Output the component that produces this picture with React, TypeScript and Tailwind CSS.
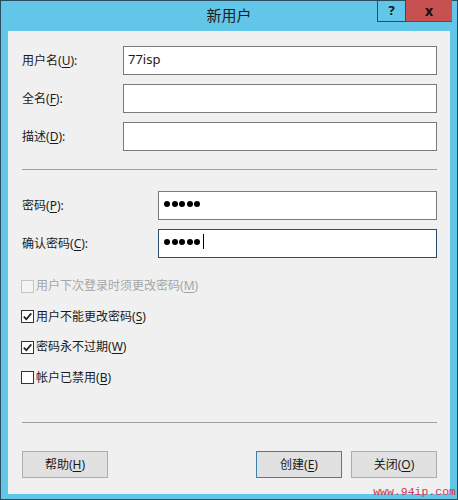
import type { ReactNode } from "react";

const FONT = "font-['Noto_Sans','Noto_Sans_CJK_SC',sans-serif]";

function Label({ text, hot, tail = ":" }: { text: string; hot: string; tail?: string }) {
  return (
    <span className="whitespace-nowrap">
      {text}(<span className="underline underline-offset-2">{hot}</span>){tail}
    </span>
  );
}

function TextBox({ children, focused }: { children?: ReactNode; focused?: boolean }) {
  return (
    <div
      className={`h-[29px] bg-white border flex items-start pl-[4px] pt-[3px] ${
        focused ? "border-[#2b4d6b]" : "border-[#7a7a7a]"
      }`}
    >
      {children}
    </div>
  );
}

function Dots({ caret }: { caret?: boolean }) {
  return (
    <div className="flex items-center gap-[1.6px] h-[16px] pl-[1px] pt-[1px]">
      {[0, 1, 2, 3, 4].map((i) => (
        <span key={i} className="w-[6px] h-[6px] rounded-full bg-black" />
      ))}
      {caret && <span className="ml-[1px] w-px h-[15px] bg-black" />}
    </div>
  );
}

function Check({ checked, disabled, text, hot }: { checked?: boolean; disabled?: boolean; text: string; hot: string }) {
  return (
    <div className="h-[30.5px] flex items-center gap-[2px]">
      <span
        className={`w-[13px] h-[13px] border flex items-center justify-center ${
          disabled ? "border-[#c4c4c4] bg-[#f4f4f4]" : "border-[#333] bg-white"
        }`}
      >
        {checked && (
          <svg width="11" height="11" viewBox="0 0 11 11">
            <path d="M1.8 5.6 L4.3 8.2 L9.3 2.4" fill="none" stroke="#222" strokeWidth="1.7" />
          </svg>
        )}
      </span>
      <span className={disabled ? "text-[#a6a6a6]" : "text-[#1a1a1a]"}>
        <Label text={text} hot={hot} tail="" />
      </span>
    </div>
  );
}

function Button({ children, primary }: { children: ReactNode; primary?: boolean }) {
  return (
    <div
      className={`w-[86px] h-[27px] flex items-center justify-center bg-[#e1e1e1] border ${
        primary ? "border-[#3c7fb1]" : "border-[#adadad]"
      }`}
    >
      {children}
    </div>
  );
}

export default function App() {
  return (
    <div className={`relative w-[458px] h-[500px] bg-[#62c6e8] border border-[#2a4e60] flex flex-col ${FONT} text-[12px] text-[#1a1a1a]`}>
      <div className="relative h-[30px] shrink-0">
        <div className="h-full flex items-center justify-center pb-[1px] text-[15px] text-[#1c1c1c]">新用户</div>
        <div className="absolute top-[-1px] right-[5px] flex">
          <div className="w-[29px] h-[22px] border border-[#2a4e60] flex items-center justify-center text-[13px] font-bold text-[#111]">
            ?
          </div>
          <div className="w-[46px] h-[22px] bg-[#c75050] border-b border-[#8a3a3a] flex items-center justify-center text-[14px] font-bold text-[#111]">
            x
          </div>
        </div>
      </div>

      <div className="flex-1 mx-[7px] mb-[5px] bg-[#f0f0f0] flex flex-col pl-[14px] pr-[13px]">
        <div className="pt-[15px] grid grid-cols-[101px_1fr] gap-y-[9px] items-center">
          <Label text="用户名" hot="U" />
          <TextBox>
            <span className="text-[13px] leading-[18px]">77isp</span>
          </TextBox>
          <Label text="全名" hot="F" />
          <TextBox />
          <Label text="描述" hot="D" />
          <TextBox />
        </div>

        <div className="mt-[18px] h-px bg-[#a0a0a0]" />

        <div className="mt-[21px] grid grid-cols-[136px_1fr] gap-y-[9px] items-center">
          <Label text="密码" hot="P" />
          <TextBox>
            <Dots />
          </TextBox>
          <Label text="确认密码" hot="C" />
          <TextBox focused>
            <Dots caret />
          </TextBox>
        </div>

        <div className="mt-[13px] -ml-[1px] flex flex-col">
          <Check disabled text="用户下次登录时须更改密码" hot="M" />
          <Check checked text="用户不能更改密码" hot="S" />
          <Check checked text="密码永不过期" hot="W" />
          <Check text="帐户已禁用" hot="B" />
        </div>

        <div className="mt-[29px] h-px bg-[#a0a0a0]" />

        <div className="mt-[28px] flex items-center">
          <Button>
            <Label text="帮助" hot="H" tail="" />
          </Button>
          <div className="flex-1" />
          <Button primary>
            <Label text="创建" hot="E" tail="" />
          </Button>
          <div className="w-[9px]" />
          <Button>
            <Label text="关闭" hot="O" tail="" />
          </Button>
        </div>
      </div>

      <div className="absolute right-[1px] bottom-[1px] font-['Liberation_Mono',monospace] text-[11.5px] leading-[12px] text-[#d0344c]">
        www.94ip.com
      </div>
    </div>
  );
}
